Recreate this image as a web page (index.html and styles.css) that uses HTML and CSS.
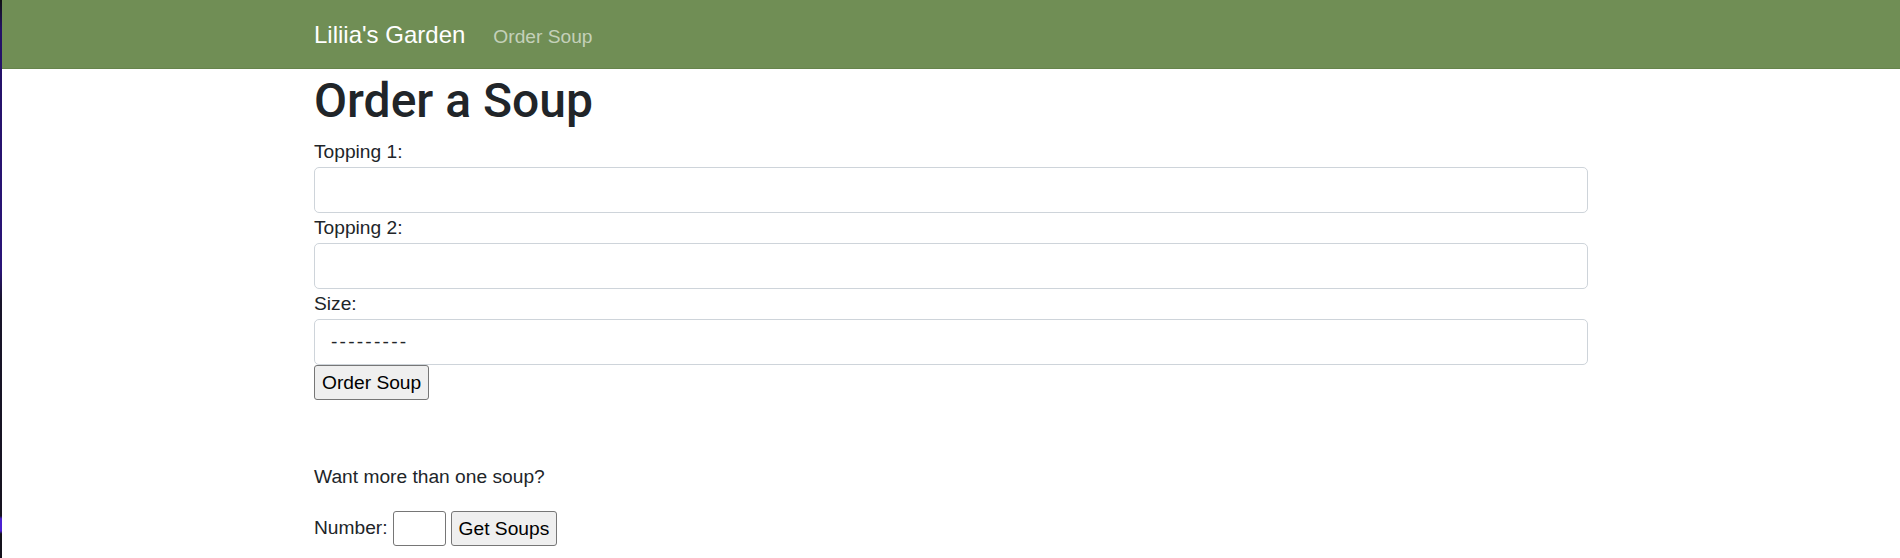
FILE: index.html
```html
<!DOCTYPE html>
<html lang="en">
<head>
<meta charset="utf-8">
<title>Liliia's Garden</title>
<link rel="stylesheet" href="styles.css">
</head>
<body>
<nav class="navbar">
  <div class="navbar-inner">
    <a class="brand" href="#">Liliia's Garden</a>
    <a class="nav-link" href="#">Order Soup</a>
  </div>
</nav>
<main class="container">
  <h1 class="title">Order a Soup</h1>
  <form class="order-form">
    <label class="field-label" for="t1">Topping 1:</label>
    <input class="form-control" id="t1" type="text">
    <label class="field-label" for="t2">Topping 2:</label>
    <input class="form-control" id="t2" type="text">
    <label class="field-label" for="sz">Size:</label>
    <select class="form-control select" id="sz">
      <option>---------</option>
    </select>
    <button class="btn" type="button">Order Soup</button>
  </form>
  <p class="more">Want more than one soup?</p>
  <form class="multi-form">
    <label for="num">Number:</label>
    <input class="num-input" id="num" type="text">
    <button class="btn" type="button">Get Soups</button>
  </form>
</main>
</body>
</html>
```
FILE: styles.css
```css
html, body {
  height: 100%;
}
body {
  margin: 0;
  border-left: 2px solid #1a1330;
  border-image: linear-gradient(to bottom, #101010 0, #241266 30px, #2a1478 270px, #18142a 300px, #16131f 515px, #4b20d2 518px, #4b20d2 530px, #14121c 533px) 1;
  font-family: "Liberation Sans", Arial, sans-serif;
  font-size: 19.2px;
  line-height: 1.5;
  color: #212529;
  background: #fff;
}
.navbar {
  background: #708e55;
  height: 68px;
  border-bottom: 1px solid #66844b;
  display: flex;
  align-items: center;
}
.navbar-inner {
  width: 1274px;
  margin: 0 auto;
  display: flex;
  align-items: baseline;
  gap: 28px;
  padding-top: 2px;
}
.brand {
  font-size: 24px;
  color: #fff;
  text-decoration: none;
}
.nav-link {
  font-size: 19.2px;
  color: rgba(255, 255, 255, 0.6);
  text-decoration: none;
}
.container {
  width: 1274px;
  margin: 0 auto;
}
.title {
  font-family: Roboto, "Liberation Sans", sans-serif;
  font-size: 48px;
  font-weight: 500;
  line-height: 57.6px;
  margin: 3px 0 7.6px;
}
.order-form {
  display: flex;
  flex-direction: column;
  align-items: flex-start;
}
.field-label {
  display: block;
  line-height: 30px;
}
.form-control {
  box-sizing: border-box;
  width: 100%;
  height: 46px;
  padding: 6px 15px;
  font: inherit;
  color: #212529;
  background: #fff;
  border: 1px solid #ced4da;
  border-radius: 5px;
  margin: 0;
}
.select {
  appearance: none;
  -webkit-appearance: none;
  padding-left: 16px;
  letter-spacing: 2.2px;
}
.btn {
  font: inherit;
  font-size: 19.2px;
  line-height: 1.2;
  color: #000;
  background: #efefef;
  border: 1px solid #767676;
  border-radius: 3px;
  padding: 4px 7px;
  height: 35px;
  margin: 0;
}
.more {
  margin: 63px 0 19.2px;
}
.multi-form {
  display: flex;
  align-items: center;
}
.num-input {
  box-sizing: border-box;
  width: 53px;
  height: 35px;
  margin: 0 5px 0 5px;
  border: 1px solid #767676;
  border-radius: 3px;
  font: inherit;
}
```
